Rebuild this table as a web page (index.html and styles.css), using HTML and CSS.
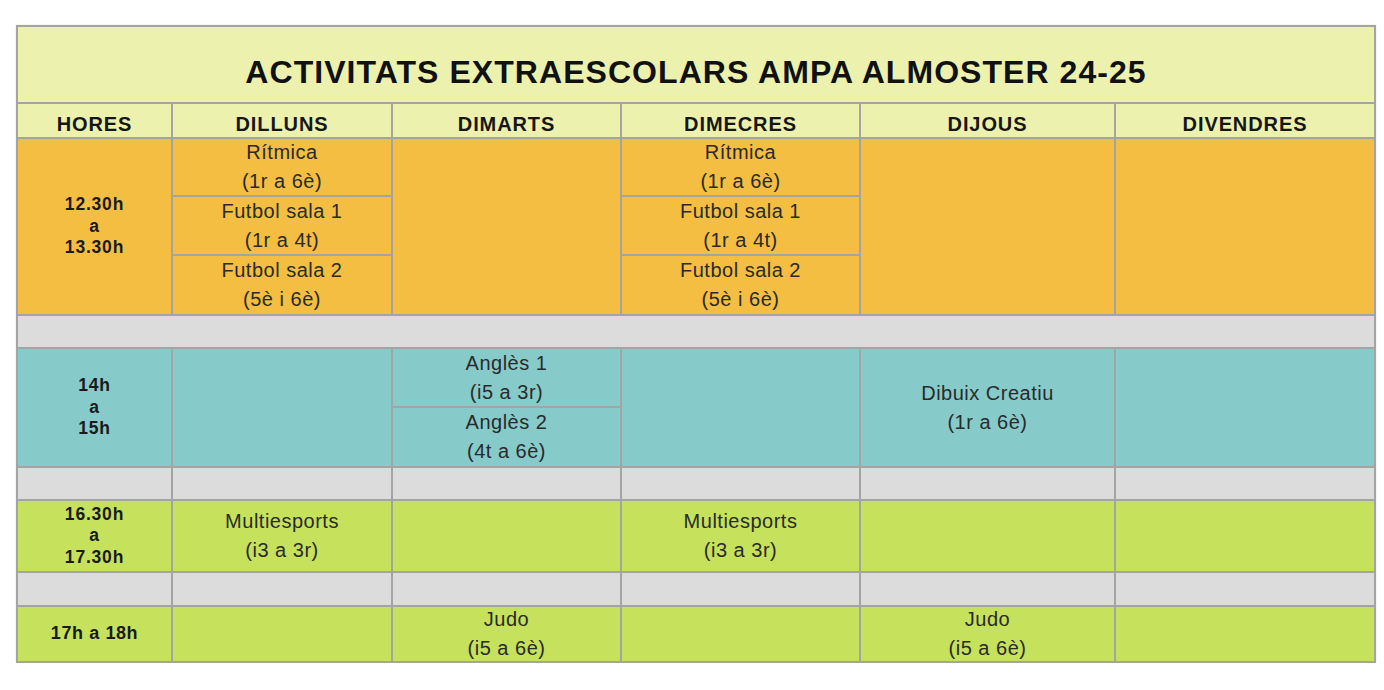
FILE: index.html
```html
<!DOCTYPE html>
<html lang="ca">
<head>
<meta charset="utf-8">
<title>Activitats extraescolars AMPA Almoster 24-25</title>
<link rel="stylesheet" href="styles.css">
</head>
<body>
<div class="schedule">
  <div class="cell title c-all">ACTIVITATS EXTRAESCOLARS AMPA ALMOSTER 24-25</div>

  <div class="cell head">HORES</div>
  <div class="cell head">DILLUNS</div>
  <div class="cell head">DIMARTS</div>
  <div class="cell head">DIMECRES</div>
  <div class="cell head">DIJOUS</div>
  <div class="cell head">DIVENDRES</div>

  <!-- 12.30 - 13.30 -->
  <div class="cell time orange r-o"><span>12.30h</span><span>a</span><span>13.30h</span></div>
  <div class="cell act orange c2 r-o1">Rítmica<br>(1r a 6è)</div>
  <div class="cell orange c3 r-o"></div>
  <div class="cell act orange c4 r-o1">Rítmica<br>(1r a 6è)</div>
  <div class="cell orange c5 r-o"></div>
  <div class="cell orange c6 r-o"></div>
  <div class="cell act orange c2 r-o2">Futbol sala 1<br>(1r a 4t)</div>
  <div class="cell act orange c4 r-o2">Futbol sala 1<br>(1r a 4t)</div>
  <div class="cell act orange c2 r-o3">Futbol sala 2<br>(5è i 6è)</div>
  <div class="cell act orange c4 r-o3">Futbol sala 2<br>(5è i 6è)</div>

  <div class="cell gray c-all r-g1"></div>

  <!-- 14 - 15 -->
  <div class="cell time teal c1 r-t"><span>14h</span><span>a</span><span>15h</span></div>
  <div class="cell teal c2 r-t"></div>
  <div class="cell act teal c3 r-t1">Anglès 1<br>(i5 a 3r)</div>
  <div class="cell act teal c3 r-t2">Anglès 2<br>(4t a 6è)</div>
  <div class="cell teal c4 r-t"></div>
  <div class="cell act teal c5 r-t">Dibuix Creatiu<br>(1r a 6è)</div>
  <div class="cell teal c6 r-t"></div>

  <div class="cell gray"></div>
  <div class="cell gray"></div>
  <div class="cell gray"></div>
  <div class="cell gray"></div>
  <div class="cell gray"></div>
  <div class="cell gray"></div>

  <!-- 16.30 - 17.30 -->
  <div class="cell time green"><span>16.30h</span><span>a</span><span>17.30h</span></div>
  <div class="cell act green">Multiesports<br>(i3 a 3r)</div>
  <div class="cell green"></div>
  <div class="cell act green">Multiesports<br>(i3 a 3r)</div>
  <div class="cell green"></div>
  <div class="cell green"></div>

  <div class="cell gray"></div>
  <div class="cell gray"></div>
  <div class="cell gray"></div>
  <div class="cell gray"></div>
  <div class="cell gray"></div>
  <div class="cell gray"></div>

  <!-- 17 - 18 -->
  <div class="cell time single green"><span>17h a 18h</span></div>
  <div class="cell green"></div>
  <div class="cell act green">Judo<br>(i5 a 6è)</div>
  <div class="cell green"></div>
  <div class="cell act green">Judo<br>(i5 a 6è)</div>
  <div class="cell green"></div>
</div>
</body>
</html>
```

FILE: styles.css
```css
html, body {
  margin: 0;
  padding: 0;
  background: #ffffff;
}

body {
  padding: 25px 0 0 16px;
  font-family: "Liberation Sans", Arial, sans-serif;
  color: #222;
}

.schedule {
  width: 1360px;
  box-sizing: border-box;
  display: grid;
  grid-template-columns: 153px 218px 227px 237px 253px 258px;
  grid-template-rows: 75px 33px 56px 57px 58px 31px 57px 58px 31px 70px 32px 54px;
  gap: 2px;
  padding: 2px;
  background: #a4a4a2;
  box-shadow: 0 0 2px rgba(0, 0, 0, 0.12);
}

.cell {
  display: flex;
  flex-direction: column;
  align-items: center;
  justify-content: center;
  text-align: center;
}

.title {
  background: #ecf2ae;
  font-weight: bold;
  font-size: 32px;
  letter-spacing: 1.05px;
  color: #111;
  padding-top: 15px;
}

.head {
  background: #ecf2ae;
  font-weight: bold;
  font-size: 20px;
  letter-spacing: 0.9px;
  color: #161616;
  padding-top: 8px;
}

.time {
  font-weight: bold;
  font-size: 17.5px;
  letter-spacing: 0.8px;
  line-height: 21.5px;
  color: #1a1a1a;
}

.time.single {
  font-size: 18px;
  letter-spacing: 0.6px;
}

.act {
  font-size: 20px;
  letter-spacing: 0.5px;
  line-height: 29px;
  color: #2a2a2a;
}

.orange { background: #f3be41; }
.teal { background: #86cbca; }
.gray { background: #dddcdd; }
.green { background: #c6e15c; }

.c-all { grid-column: 1 / -1; }
.c1 { grid-column: 1; }
.c2 { grid-column: 2; }
.c3 { grid-column: 3; }
.c4 { grid-column: 4; }
.c5 { grid-column: 5; }
.c6 { grid-column: 6; }

.r-o { grid-row: 3 / 6; }
.r-o1 { grid-row: 3; }
.r-o2 { grid-row: 4; }
.r-o3 { grid-row: 5; }
.r-g1 { grid-row: 6; }
.r-t { grid-row: 7 / 9; }
.r-t1 { grid-row: 7; }
.r-t2 { grid-row: 8; }
```
